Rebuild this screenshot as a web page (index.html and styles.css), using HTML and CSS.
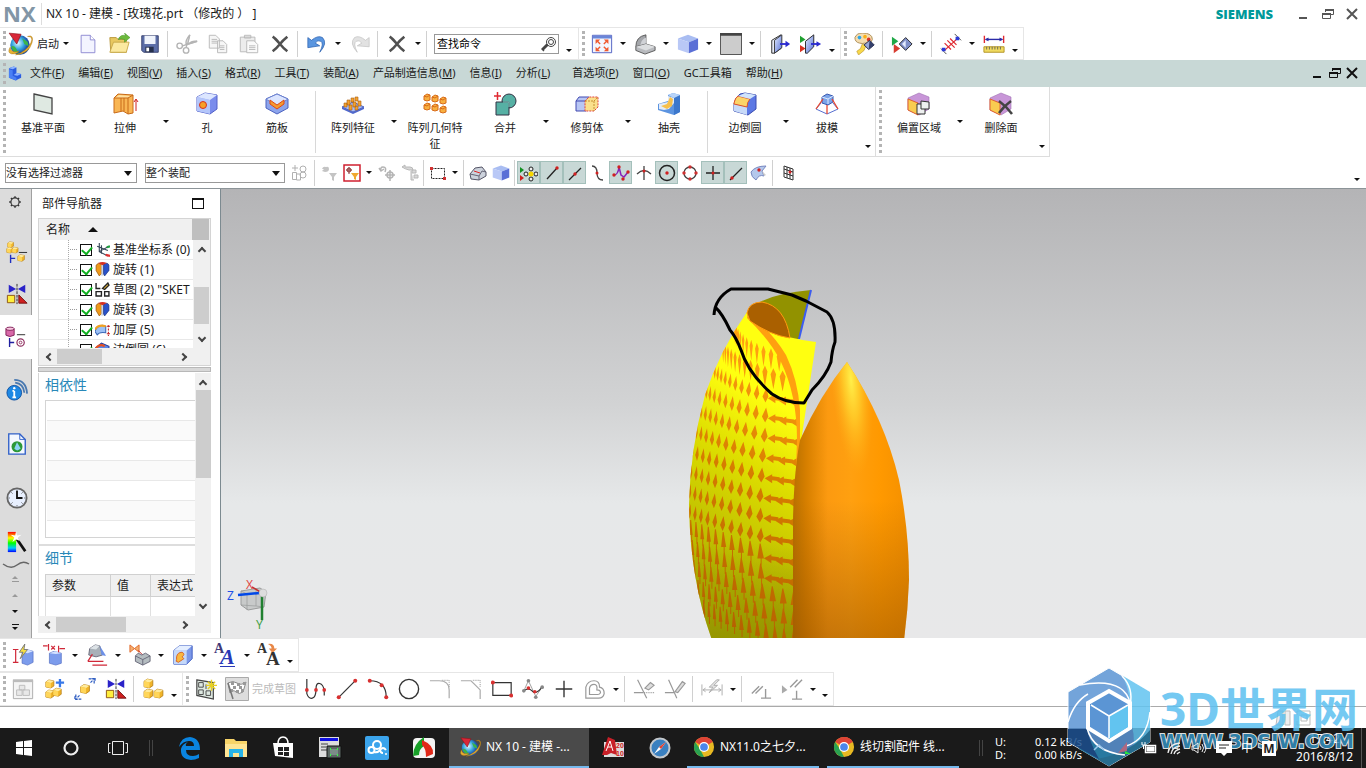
FILE: index.html
```html
<!DOCTYPE html>
<html lang="zh-CN">
<head>
<meta charset="utf-8">
<title>NX 10 - 建模</title>
<link rel="stylesheet" href="styles.css">
</head>
<body>
<svg class="defs" aria-hidden="true">
  <defs>
    <linearGradient id="gBlue" x1="0" y1="0" x2="1" y2="1"><stop offset="0" stop-color="#e6eeff"/><stop offset="1" stop-color="#5570d8"/></linearGradient>
    <linearGradient id="gYel" x1="0" y1="0" x2="1" y2="1"><stop offset="0" stop-color="#ffefae"/><stop offset="1" stop-color="#e39b1c"/></linearGradient>
    <linearGradient id="gGray" x1="0" y1="0" x2="1" y2="1"><stop offset="0" stop-color="#f2f2f2"/><stop offset="1" stop-color="#8c9098"/></linearGradient>
    <radialGradient id="gGlobe" cx=".4" cy=".4"><stop offset="0" stop-color="#e0f8ff"/><stop offset=".6" stop-color="#38a8e0"/><stop offset="1" stop-color="#1c50a8"/></radialGradient>
    <linearGradient id="gRain" x1="0" y1="0" x2="0" y2="1"><stop offset="0" stop-color="#f00"/><stop offset=".3" stop-color="#ff0"/><stop offset=".55" stop-color="#0f0"/><stop offset=".8" stop-color="#0cf"/><stop offset="1" stop-color="#00f"/></linearGradient>
  </defs>
  <symbol id="nx" viewBox="0 0 24 24"><circle cx="12" cy="13" r="9" fill="url(#gGlobe)"/><path d="M4 14q3-1 5 3l2 4q-6-1-7-7zM14 7l5 3 1 4-4-2z" fill="#3bb44a"/><path d="M19 5q6 0 3 6-4 8-14 11 12-1 15-11 2-8-4-6zM3 15q-3 5 1 6 4 1 7-2-5 1-7-1-1-1-1-3z" fill="#e8b030" stroke="#b07a10" stroke-width=".5"/><path d="M2 2l11 1-4 9z" fill="#d82838" stroke="#8c1018" stroke-width=".6"/></symbol>
  <symbol id="cube" viewBox="0 0 24 24"><path d="M1 6l11-4 11 4-10 4z" fill="#a9bdf2"/><path d="M1 6l12 4v12L1 18z" fill="#b9c8f6"/><path d="M23 6l-10 4v12l10-4z" fill="#5a6fd6"/></symbol>
  <symbol id="box" viewBox="0 0 10 10"><path d="M1 3l3-2 5 1v5L6 9 1 8z" fill="#f0b429" stroke="#b07810" stroke-width=".7"/><path d="M1 3l3-2 5 1-3 2z" fill="#ffeb9c"/><path d="M1 3l5 1v5L1 8z" fill="#ffd65a"/></symbol>
  <symbol id="mirror" viewBox="0 0 24 24"><path d="M3 2v9l8-4.500zM21 2v9l-8-4.500z" fill="#2a22c8"/><path d="M12 1v22" stroke="#222" stroke-dasharray="3 1"/><path d="M1.500 13.500h8v8h-8z" fill="#ffee3c" stroke="#8a5010"/><path d="M14 13v9h9z" fill="#d02020" stroke="#701010"/></symbol>
  <symbol id="delx" viewBox="0 0 24 24"><path d="M4 4q3 2 8 8 4 5 8 8M20 4q-5 4-8 8-4 5-8 8" stroke="#505050" stroke-width="2.800" fill="none"/></symbol>
  <symbol id="exit" viewBox="0 0 24 24"><path d="M3 8l10-6v15L6 22H3z" fill="#e8ecf8" stroke="#222"/><path d="M6 8l8-6v14l-8 6z" fill="url(#gBlue)" stroke="#333"/><path d="M12 12h7" stroke="#2a2ad0" stroke-width="2"/><path d="M18 8.500l5 3.500-5 3.500z" fill="#2a2ad0"/></symbol>
  <symbol id="restore" viewBox="0 0 14 14"><path d="M4.500 5V2.500h8v5H10M1.500 6.500h8v5h-8z" fill="none" stroke="currentColor"/><path d="M4 3h9M1 7h9" stroke="currentColor" stroke-width="2"/></symbol>
  <symbol id="close" viewBox="0 0 14 14"><path d="M2 2l10 10M12 2L2 12" stroke="currentColor" stroke-width="2" fill="none"/></symbol>
  <symbol id="min" viewBox="0 0 14 14"><path d="M3 11h8" stroke="currentColor" stroke-width="2"/></symbol>
  <symbol id="rev" viewBox="0 0 14 14"><path d="M1 3q2-3 5-1v9L4 13 1 8z" fill="#f09a18" stroke="#8a4a08" stroke-width=".6"/><path d="M6 2h3v10l-3 1z" fill="#c8d4e8"/><path d="M8 2q4-2 5 1v5l-4 5-1-2z" fill="#2a52c8" stroke="#142a78" stroke-width=".6"/><path d="M3 1q4-2 8 0L7 3z" fill="#d83020"/></symbol>
  <symbol id="chrome" viewBox="0 0 24 24"><circle cx="12" cy="12" r="11" fill="#e8b923"/><path d="M12 12L2.500 6.500A11 11 0 0 1 21.500 6.500z" fill="#de4436"/><path d="M12 1a11 11 0 0 1 9.500 5.500H12z" fill="#de4436"/><path d="M2.500 6.500L8 15l4 8A11 11 0 0 1 2.500 6.500z" fill="#2aa252"/><path d="M8 15l4 2 0-5z" fill="#2aa252"/><circle cx="12" cy="12" r="5.500" fill="#fff"/><circle cx="12" cy="12" r="4.200" fill="#4a86ea"/></symbol>
</svg>

<header class="titlebar">
  <b class="nxlogo">NX</b>
  <span class="title">NX 10 - 建模 - [玫瑰花.prt （修改的 ）&nbsp;]</span>
  <b class="brand">SIEMENS</b>
  <div class="winbtns">
    <button aria-label="最小化"><svg><use href="#min"/></svg></button>
    <button aria-label="还原"><svg><use href="#restore"/></svg></button>
    <button aria-label="关闭"><svg><use href="#close"/></svg></button>
  </div>
</header>

<div class="toolrow toprow">
  <div class="group first">
    <button class="start"><svg class="i24"><use href="#nx"/></svg>启动<i class="tri"></i></button>
    <button class="tb" aria-label="新建"><svg viewBox="0 0 24 24"><path d="M4.500 2.500h10l5 5v14h-15z" fill="#f3f4ff" stroke="#8a86d0"/><path d="M14.500 2.500v5h5" fill="#fff" stroke="#8a86d0"/></svg></button>
    <button class="tb" aria-label="打开"><svg viewBox="0 0 24 24"><path d="M2 5h7l2 2h9v14H3z" fill="#e8c860" stroke="#b8963a"/><path d="M2 21l4-11h17l-3 11z" fill="#fbe9a0" stroke="#c8a84a"/><path d="M11 7q3-6 8-4l-1-3 6 5-6 5V7q-4-1-7 0z" fill="#6cba3c" stroke="#3c8a20" stroke-width=".5"/></svg></button>
    <button class="tb" aria-label="保存"><svg viewBox="0 0 24 24"><path d="M3 3h18v18H5l-2-2z" fill="#5c6ea8" stroke="#34406c"/><path d="M6 3h12v9H6z" fill="#f0f4fc"/><path d="M7 15h9v6H7z" fill="#26304c"/><path d="M8 16h3v4H8z" fill="#fff"/></svg></button>
    <i class="sep"></i>
    <button class="tb" aria-label="剪切"><svg viewBox="0 0 24 24" fill="none" stroke="#b4b4b4" stroke-width="1.500"><path d="M15 2l-4 14M23 9L7 14"/><path d="M15 2q-5 6-4 10l2-1z M23 9q-6-1-9 3z" fill="#e4e4e4"/><circle cx="4" cy="14" r="3"/><circle cx="11" cy="19" r="3"/></svg></button>
    <button class="tb" aria-label="复制"><svg viewBox="0 0 24 24" fill="#f6f6f6" stroke="#b8b8b8"><path d="M2.500 2.500h7l4 4v10h-11zM11.500 8.500h6l4 4v9h-10z"/><path d="M5 7h6M5 9h6M5 11h6M14 14h5M14 16h5M14 18h5"/></svg></button>
    <button class="tb" aria-label="粘贴"><svg viewBox="0 0 24 24" fill="#ececec" stroke="#b8b8b8"><path d="M2.500 4.500h16v16h-16zM7 2.500h7v3H7z"/><path d="M9.500 8.500h8l4 4v9h-12z" fill="#fafafa"/><path d="M12 14h7M12 16h7M12 18h7"/></svg></button>
    <button class="tb" aria-label="删除"><svg><use href="#delx"/></svg></button>
    <i class="sep"></i>
    <button class="tb" aria-label="撤销"><svg viewBox="0 0 24 24"><path d="M2 5l4 3q7-6 12-3 6 6-3 16 5-10 1-12-3-2-6 2l5 3-13 2z" fill="#5a96e0" stroke="#2c62b0" stroke-width=".8"/></svg></button>
    <button class="caret" aria-label="撤销列表"></button>
    <button class="tb" aria-label="重做"><svg viewBox="0 0 24 24"><path d="M22 5l-4 3q-7-6-12-3-6 6 3 16-5-10-1-12 3-2 6 2l-5 3 13 1z" fill="#e2e2e2" stroke="#c2c2c2" stroke-width=".8"/></svg></button>
    <i class="sep"></i>
    <button class="tb" aria-label="清除"><svg><use href="#delx"/></svg></button>
    <button class="caret" aria-label="清除列表"></button>
    <i class="sep"></i>
    <label class="search"><input type="text" value="查找命令" aria-label="查找命令"><svg viewBox="0 0 16 16" fill="none" stroke="#444"><circle cx="10" cy="6" r="4.500"/><circle cx="10" cy="6" r="2.500"/><path d="M7 9l-5 5M6 8l-5 5 2 2" stroke-width="1.500"/></svg></label>
    <button class="caret low" aria-label="工具栏选项"></button>
  </div>
  <div class="group">
    <button class="tb" aria-label="适合窗口"><svg viewBox="0 0 24 24"><path d="M1.500 2.500h21v19h-21z" fill="#f2f6ff" stroke="#4a5cc0"/><path d="M2 3h20v3H2z" fill="#6a86d8"/><path d="M10 12L7 9M14 12l3-3M10 15l-3 3M14 15l3 3" stroke="#f05a30" stroke-width="1.500"/><g fill="#f05a30"><path d="M5 7h5l-5 5zM19 7h-5l5 5zM5 20h5l-5-5zM19 20h-5l5-5z"/></g></svg></button>
    <button class="caret" aria-label="视图列表"></button>
    <button class="tb" aria-label="渲染"><svg viewBox="0 0 24 24"><path d="M2 15Q2 4 13 2v11l-5 5z" fill="#a4a6aa" stroke="#555"/><path d="M7 13q1-6 6-8v8z" fill="#d0d2d6"/><path d="M2 15l11-3 10 3v4l-11 4-10-4z" fill="#b8babe" stroke="#555"/><path d="M2 15l11-3 10 3-10 4z" fill="#dcdee0"/></svg></button>
    <button class="caret" aria-label="渲染列表"></button>
    <button class="tb" aria-label="定向视图"><svg><use href="#cube"/></svg></button>
    <button class="caret" aria-label="方向列表"></button>
    <button class="tb" aria-label="背景"><svg viewBox="0 0 24 24"><path d="M.500 .500h23v23H.500z" fill="#ccc" stroke="#444"/><path d="M0 1.500h24" stroke="#444" stroke-width="3"/></svg></button>
    <button class="caret" aria-label="背景列表"></button>
    <i class="sep"></i>
    <button class="tb" aria-label="剪切截面"><svg><use href="#exit"/></svg></button>
    <button class="tb" aria-label="编辑截面"><svg viewBox="0 0 24 24"><path d="M0 3l6 4-6 4z" fill="#20a030"/><path d="M0 13l6 4-6 4z" fill="#d83020"/><path d="M6 9l9-7v13l-7 7H6z" fill="url(#gBlue)" stroke="#222"/><path d="M12 12h7" stroke="#2a2ad0" stroke-width="2"/><path d="M18 9l5 3-5 3z" fill="#2a2ad0"/></svg></button>
    <button class="caret low" aria-label="工具栏选项"></button>
  </div>
  <div class="group wide">
    <button class="tb" aria-label="对象显示"><svg viewBox="0 0 24 24"><path d="M9 0q11 0 11 7-2 6-8 4-3 1-6 0-5-1-5-6 2-5 8-5z" fill="#f4dcae" stroke="#a88850"/><circle cx="6" cy="5" r="2" fill="#2aa4e8"/><circle cx="12" cy="4" r="2" fill="#f8b018"/><circle cx="16" cy="7" r="2" fill="#e03020"/><path d="M9 12l4 2-2 5-6 5-2-4 4-3z" fill="#f8d848" stroke="#b08a28" stroke-width=".6"/><path d="M11 13l6-5 5 5-6 5z" fill="#98a8d8" stroke="#223"/><path d="M17 8l5 5-6 5z" fill="#34406c"/></svg></button>
    <i class="sep"></i>
    <button class="tb" aria-label="显示和隐藏"><svg viewBox="0 0 24 24"><path d="M1 4l7 5-7 5z" fill="#20a848"/><path d="M3 12l7 5-7 5z" fill="#d83c30"/><path d="M9 12l7-7 7 7-7 7z" fill="#8090c8" stroke="#222"/><path d="M12 12l4-4v8z" fill="#e4ecff"/></svg></button>
    <button class="caret" aria-label="显示列表"></button>
    <i class="sep"></i>
    <button class="tb" aria-label="测量"><svg viewBox="0 0 24 24"><path d="M1 17l6 6M16 1l7 7" stroke="#444"/><path d="M5 19L20 5M5 11l7 7M8 8l8 8M11 6l7 7" stroke="#e02830" stroke-width="1.300"/><path d="M2 16h4v4H2zM17 4h4v4h-4z" fill="#2a3ad8"/></svg></button>
    <button class="caret" aria-label="测量列表"></button>
    <button class="tb" aria-label="测量距离"><svg viewBox="0 0 24 24"><path d="M1.500 3v8M22.500 3v8" stroke="#e02830" stroke-width="1.500"/><path d="M3 7h18" stroke="#2a2aa8" stroke-width="1.500"/><path d="M2 7l4-2v4zM22 7l-4-2v4z" fill="#2a2aa8"/><path d="M1 15h22v6H1z" fill="#f0da60" stroke="#b09020"/><path d="M4 15v3M7 15v3M10 15v3M13 15v3M16 15v3M19 15v3" stroke="#665"/></svg></button>
    <button class="caret low" aria-label="工具栏选项"></button>
  </div>
</div>

<nav class="menubar">
  <svg class="partico" viewBox="0 0 16 16"><path d="M1 3l5-2 3 1v6l5 1v4l-6 3-7-3z" fill="#2a5ce0"/><path d="M1 3l5-2 3 1-4 2z" fill="#8cb4ff"/><path d="M1 4l4 1v6l4 2v3l-8-3z" fill="#4a80f4"/><path d="M6 10l3-2 5 1-4 2z" fill="#8cb4ff"/></svg>
  <button>文件(<u>F</u>)</button><button>编辑(<u>E</u>)</button><button>视图(<u>V</u>)</button><button>插入(<u>S</u>)</button><button>格式(<u>R</u>)</button><button>工具(<u>T</u>)</button><button>装配(<u>A</u>)</button><button>产品制造信息(<u>M</u>)</button><button>信息(<u>I</u>)</button><button class="gapafter">分析(<u>L</u>)</button><button>首选项(<u>P</u>)</button><button>窗口(<u>O</u>)</button><button>GC工具箱</button><button>帮助(<u>H</u>)</button>
  <div class="winbtns docbtns">
    <button aria-label="最小化"><svg><use href="#min"/></svg></button>
    <button aria-label="还原"><svg><use href="#restore"/></svg></button>
    <button aria-label="关闭"><svg><use href="#close"/></svg></button>
  </div>
</nav>

<div class="ribbon">
  <div class="rgroup">
    <button class="rb"><svg viewBox="0 0 24 24"><path d="M3 2l18 4v16L3 18z" fill="#dfe9e2" stroke="#444" stroke-width="1.300"/></svg>基准平面</button>
    <button class="caret" aria-label="更多"></button>
    <button class="rb"><svg viewBox="0 0 24 24"><path d="M1 6l4-4 15 1v18l-5 1-5-3-9 2z" fill="#f9b654" stroke="#c86a18"/><path d="M2 6l4-3 12 1-3 2z" fill="#ffe0a0"/><path d="M1 6h14l5-3M8 6v13M11 6v13M15 6v16" stroke="#c86a18" fill="none"/><path d="M23 19V8M21 10l2-3 2 3" stroke="#d02020" fill="none"/></svg>拉伸</button>
    <button class="caret" aria-label="更多"></button>
    <button class="rb"><svg viewBox="0 0 24 24"><path d="M2 5l8-4 12 2v14l-7 5-13-3z" fill="#7a8cec" stroke="#5260c8"/><path d="M2 5l13 3v14L2 19z" fill="#b4c6fa"/><path d="M2 5l8-4 12 2-7 5z" fill="#dce6ff"/><circle cx="8" cy="13" r="3.500" fill="#f6a028" stroke="#d83020"/></svg>孔</button>
    <button class="rb"><svg viewBox="0 0 24 24"><path d="M1 7l11-5 11 5v9l-11 6-11-6z" fill="#8ca4ec" stroke="#4c62c0"/><path d="M1 7l11-5 11 5-11 7z" fill="#dbe5ff" stroke="#6c82d0"/><path d="M5 8l7 5 7-5v4l-7 5-7-5z" fill="#f59a30" stroke="#e04818"/></svg>筋板</button>
    <i class="rsep"></i>
    <button class="rb"><svg viewBox="0 0 24 24"><path d="M1 15l11-5 11 5-11 5z" fill="#a8bcf4" stroke="#4c62c0"/><path d="M1 15v2l11 5 11-5v-2l-11 5z" fill="#5068cc"/><g fill="#f4a22e" stroke="#a86010" stroke-width=".6"><path d="M6 8h3v5H6zM10 6h3v4h-3zM14 5h3v4h-3zM3 11h3v4H3zM8 13h3v5H8zM12 10h3v5h-3zM17 9h3v5h-3zM14 14h3v4h-3z"/></g></svg>阵列特征</button>
    <button class="caret" aria-label="更多"></button>
    <button class="rb"><svg viewBox="0 0 24 24"><g fill="#f8b040" stroke="#d86a18"><path d="M1 4l3-2 3 1v5l-3 1-3-1zM9 5l3-2 3 1v5l-3 1-3-1zM17 7l3-2 3 1v5l-3 1-3-1zM1 13l3-2 3 1v5l-3 1-3-1zM9 14l3-2 3 1v5l-3 1-3-1zM17 16l3-2 3 1v5l-3 1-3-1z"/><path d="M1 4l3 1 3-2M9 5l3 1 3-2M17 7l3 1 3-2M1 13l3 1 3-2M9 14l3 1 3-2M17 16l3 1 3-2" fill="none"/></g></svg>阵列几何特征</button>
    <button class="rb"><svg viewBox="0 0 24 24"><circle cx="16" cy="9" r="7" fill="#56b0a4" stroke="#334"/><path d="M3 10h13v13H3z" fill="#56b0a4" stroke="#334"/><path d="M10 10h6v5" fill="none" stroke="#80c8be"/><path d="M1 4h7M4.500 0v8" stroke="#e02830" stroke-width="1.500"/></svg>合并</button>
    <button class="caret" aria-label="更多"></button>
    <button class="rb"><svg viewBox="0 0 24 24"><path d="M1 9l3-4h10l-3 4v10H1z" fill="#b8c6f4" stroke="#4048b0"/><path d="M1 9h10" stroke="#4048b0"/><path d="M10 9l4-4h9v10l-4 4h-9z" fill="#fae08c" stroke="#e04040" stroke-dasharray="2 1"/><path d="M10 9h9v10M19 9l4-4" fill="none" stroke="#c89030" stroke-dasharray="2 1"/></svg>修剪体</button>
    <button class="caret" aria-label="更多"></button>
    <button class="rb"><svg viewBox="0 0 24 24"><path d="M11 3l5-2 7 2v17l-6 3-16-5v-6l10-3z" fill="#5c94e0"/><path d="M17 6l6-3v17l-6 3z" fill="#3c78cc"/><path d="M2 12l9-2V4l6 2v5l-5 6-5 1-5-1z" fill="#e4ecf8"/><path d="M4 14l6-2 3-7 3 2-1 7-5 3z" fill="#f6c04c"/><path d="M11 3l5-2 7 2-6 3z" fill="#b8d4f8"/></svg>抽壳</button>
    <i class="rsep"></i>
    <button class="rb"><svg viewBox="0 0 24 24"><path d="M1 12q1-7 6-10l5-1 11 2v14l-8 6-14-4z" fill="#5c78e4" stroke="#3a4cb0"/><path d="M1 12l13 3v8L1 19z" fill="#c8daf8"/><path d="M1 11q1-5 4-7l12 3q-3 3-3 8L1 12z" fill="#fbd468" stroke="#e05028"/><path d="M5 4l7-3 11 2-6 4z" fill="#d0e4fc"/></svg>边倒圆</button>
    <button class="caret" aria-label="更多"></button>
    <button class="rb"><svg viewBox="0 0 24 24"><path d="M6 11l-5 6 11 5 11-5-5-6" fill="#fff" stroke="#5870d0"/><path d="M7 5l5-3 6 2v6l-5 3-6-2z" fill="#7ca4e8" stroke="#3858b0"/><path d="M7 5l6 2 5-3M13 7v5" fill="none" stroke="#dbe8ff"/><path d="M12 13v9M8 7l-7 10M17 7l6 10" stroke="#e84830" stroke-width="1.300"/></svg>拔模</button>
    <button class="caret end" aria-label="选项"></button>
  </div>
  <div class="rgroup">
    <button class="rb"><svg viewBox="0 0 24 24"><path d="M1 6l11-5 10 4v12l-10 6-11-5z" fill="#c896d8" stroke="#a070b4" stroke-width=".6"/><path d="M1 7l10 4v12L1 18z" fill="#f9cc50" stroke="#e06030"/><path d="M10 12h4V9l8 1v7h-4v5h-8z" fill="#eef0f0" stroke="#333"/><path d="M14 12v5h4" fill="none" stroke="#333"/></svg>偏置区域</button>
    <button class="caret" aria-label="更多"></button>
    <button class="rb"><svg viewBox="0 0 24 24"><path d="M1 6l11-5 10 4v12l-10 6-11-5z" fill="#c896d8" stroke="#a070b4" stroke-width=".6"/><path d="M1 7l10 4v12L1 18z" fill="#f9cc50" stroke="#e06030"/><path d="M10 9q7 5 13 13M22 9q-7 5-12 12" stroke="#444" stroke-width="2.500" fill="none"/></svg>删除面</button>
    <button class="caret end" aria-label="选项"></button>
  </div>
</div>

<div class="selbar">
  <span class="combo c1"><select aria-label="选择过滤器"><option>没有选择过滤器</option></select></span>
  <span class="combo c2"><select aria-label="选择范围"><option>整个装配</option></select></span>
  <button class="sb wide" aria-label="仅在工作部件内"><svg viewBox="0 0 18 18" fill="none" stroke="#b0b0b0"><path d="M2.500 8.500h4v7h-4zM6.500 10h4v6h-4zM5 1v6M2 4h6"/><circle cx="13" cy="5" r="3"/><circle cx="13" cy="11" r="3"/></svg></button>
  <i class="sep"></i>
  <button class="sb" aria-label="重置过滤器"><svg viewBox="0 0 18 18"><path d="M2 5q1-3 4-2 3-1 3 2t-4 3L2 7l2-2zM9 9h8l-3 4v4l-2-1v-3z" fill="#c4c4c4"/></svg></button>
  <button class="sb" aria-label="常规选择过滤器"><svg viewBox="0 0 18 18"><path d="M1 1h16v16H1z" fill="#fff" stroke="#d02030" stroke-width="1.500"/><path d="M6 3v7M3 6h6" stroke="#833"/><circle cx="6" cy="6" r="2" fill="none" stroke="#833"/><path d="M8 9h8l-3 4v3l-2-1v-2z" fill="#f0a830"/></svg></button>
  <button class="caret" aria-label="更多"></button>
  <button class="sb" aria-label="选择意图"><svg viewBox="0 0 18 18" fill="none" stroke="#b4b4b4" stroke-width="1.500"><path d="M7 8q2-5-2-5-3 0-2 4M1 4l2 3 3-2M12 6v11M7 11h10"/><circle cx="12" cy="11" r="3"/></svg></button>
  <button class="sb" aria-label="向上一级"><svg viewBox="0 0 18 18" fill="#d8d8d8" stroke="#b8b8b8"><path d="M1 3l3-2v2h5q3 0 3 3H8q-4-1-7-3zM11 6h4v3h-4zM13 11h4v3h-4zM10 7v9h3"/></svg></button>
  <i class="sep"></i>
  <button class="sb" aria-label="矩形选择"><svg viewBox="0 0 18 18"><path d="M2.500 4.500h13v10h-13z" fill="none" stroke="#222" stroke-dasharray="2 1"/><path d="M1 3h3v3H1zM14 13h3v3h-3z" fill="#d03030"/></svg></button>
  <button class="caret" aria-label="更多"></button>
  <i class="sep"></i>
  <button class="sb" aria-label="高亮隐藏边"><svg viewBox="0 0 18 18"><path d="M1 10l5-6 7-1 4 5v4l-7 4-8-1z" fill="#ccd2dc" stroke="#556"/><path d="M1 10l9 2 3-5 4 1M10 12v4" fill="none" stroke="#667"/><path d="M5 7l6 2" stroke="#d22"/></svg></button>
  <button class="sb" aria-label="体显示"><svg><use href="#cube"/></svg></button>
  <i class="sep"></i>
  <button class="sb on" aria-label="捕捉点"><svg viewBox="0 0 18 18"><path d="M0 3l4 3-4 3z" fill="#109020"/><path d="M0 11l4 3-4 3z" fill="#d02020"/><g fill="#eee" stroke="#222"><circle cx="11" cy="5" r="2"/><circle cx="6" cy="10" r="2"/><circle cx="16" cy="10" r="2"/><circle cx="11" cy="15" r="2"/></g><circle cx="11" cy="10" r="2.500" fill="#f8d800"/></svg></button>
  <button class="sb on" aria-label="端点"><svg viewBox="0 0 18 18"><path d="M4 15L14 4" stroke="#222" stroke-width="1.300"/><circle cx="14" cy="4" r="1.700" fill="#d02020"/></svg></button>
  <button class="sb on" aria-label="中点"><svg viewBox="0 0 18 18"><path d="M3 16L15 4" stroke="#222" stroke-width="1.300"/><circle cx="9" cy="10" r="1.700" fill="#d02020"/></svg></button>
  <button class="sb" aria-label="控制点"><svg viewBox="0 0 18 18"><path d="M3 2q5 0 5 7t6 7" fill="none" stroke="#444" stroke-width="1.300"/><circle cx="8" cy="9" r="1.500" fill="#d02020"/></svg></button>
  <button class="sb on" aria-label="极点"><svg viewBox="0 0 18 18"><path d="M2 11q4 0 5-8l2 8 3 2 4-5" fill="none" stroke="#8820b8" stroke-width="1.500"/><g fill="#d02020"><circle cx="2" cy="11" r="1.700"/><circle cx="7" cy="3" r="1.700"/><circle cx="11" cy="15" r="1.700"/><circle cx="16" cy="8" r="1.700"/></g></svg></button>
  <button class="sb" aria-label="交点"><svg viewBox="0 0 18 18"><path d="M2 10q7-7 14 0M9 2v14" fill="none" stroke="#444" stroke-width="1.300"/><circle cx="9" cy="7" r="1.500" fill="#d02020"/></svg></button>
  <button class="sb on" aria-label="圆弧中心"><svg viewBox="0 0 18 18"><circle cx="9" cy="9" r="7.500" fill="none" stroke="#222" stroke-width="1.500"/><circle cx="9" cy="9" r="1.700" fill="#d02020"/></svg></button>
  <button class="sb" aria-label="象限点"><svg viewBox="0 0 18 18"><circle cx="9" cy="9" r="6" fill="none" stroke="#444" stroke-width="1.300"/><g fill="#d03030"><circle cx="9" cy="3" r="1.700"/><circle cx="9" cy="15" r="1.700"/><circle cx="3" cy="9" r="1.700"/><circle cx="15" cy="9" r="1.700"/></g></svg></button>
  <button class="sb on" aria-label="现有点"><svg viewBox="0 0 18 18"><path d="M9 2v14M2 9h14" stroke="#222" stroke-width="1.300"/><circle cx="9" cy="9" r="1.500" fill="#d02020"/></svg></button>
  <button class="sb on" aria-label="曲线上的点"><svg viewBox="0 0 18 18"><path d="M3 16L15 4" stroke="#222" stroke-width="1.300"/><circle cx="5" cy="14" r="1.700" fill="#d02020"/></svg></button>
  <button class="sb" aria-label="面上的点"><svg viewBox="0 0 18 18"><path d="M1 8q4-6 15-6l-4 5 2 5q-5-2-8 4-5-3-5-8z" fill="#b4c8ec" stroke="#7888c0"/><path d="M12 7l2 5 2-1z" fill="#ccc"/><circle cx="9" cy="6" r="1.700" fill="#d02020"/></svg></button>
  <i class="sep"></i>
  <button class="sb wide" aria-label="栅格"><svg viewBox="0 0 18 18"><path d="M4 2l9 3v11l-9-3zM7 3v11M10 4v11M4 5l9 3M4 9l9 3" fill="none" stroke="#333"/><circle cx="10" cy="8" r="1.500" fill="#d02020"/></svg></button>
  <button class="caret low barend" aria-label="选项"></button>
</div>

<main class="work">
  <aside class="rail">
    <button class="gear" aria-label="资源条选项"><svg viewBox="0 0 24 24"><circle cx="12" cy="12" r="7" fill="none" stroke="#333" stroke-width="2"/><path d="M12 2v3M12 19v3M2 12h3M19 12h3M5 5l2 2M17 17l2 2M19 5l-2 2M5 19l2-2" stroke="#333" stroke-width="2.500"/></svg></button>
    <button aria-label="装配导航器"><svg viewBox="0 0 24 24"><use href="#box" x="1" y="0" width="8" height="8"/><use href="#box" x="0" y="6" width="8" height="8"/><use href="#box" x="6" y="6" width="8" height="8"/><path d="M14 12.500h9" stroke="#222"/><path d="M5 15v9M5 19h5" stroke="#2030c0" stroke-width="1.500"/><use href="#box" x="12" y="14" width="9" height="9"/></svg></button>
    <button aria-label="约束导航器"><svg><use href="#mirror"/></svg></button>
    <button class="active" aria-label="部件导航器"><svg viewBox="0 0 24 24"><path d="M1 3v7q4 3 9 0V3z" fill="#d868a8" stroke="#802058"/><ellipse cx="5.500" cy="3" rx="4.500" ry="1.800" fill="#f8c8e0" stroke="#802058"/><path d="M13 9.500h9" stroke="#222"/><path d="M5 13v10M5 18h5" stroke="#2020a0" stroke-width="1.500"/><circle cx="17" cy="18" r="4" fill="none" stroke="#903060" stroke-width="1.300"/><circle cx="17" cy="18" r="1.500" fill="none" stroke="#903060"/></svg></button>
    <button class="lg info" aria-label="HD3D 工具"><svg viewBox="0 0 24 24"><circle cx="9" cy="15" r="8" fill="#1e88e4" stroke="#1050a0"/><path d="M9 13v7M7 13h2M7 20h4" stroke="#fff" stroke-width="2"/><circle cx="9" cy="10" r="1.300" fill="#fff"/><path d="M10 4q9 1 10 11M9 1q13 0 14 15" fill="none" stroke="#4878b0" stroke-width="2"/></svg></button>
    <button class="lg" aria-label="网页浏览器"><svg viewBox="0 0 24 24"><path d="M3 1h12l6 6v16H3z" fill="#f4f8ff" stroke="#3060c8" stroke-width="1.500"/><path d="M15 1v6h6" fill="none" stroke="#3060c8"/><circle cx="12" cy="15" r="6" fill="#2c9838"/><path d="M12 10l4 7q-4 4-7 0z" fill="#8cd4f4"/></svg></button>
    <button class="lg" aria-label="历史记录"><svg viewBox="0 0 24 24"><circle cx="12" cy="12" r="10.500" fill="#e8f0ff" stroke="#666" stroke-width="2"/><path d="M12 4v8h6" fill="none" stroke="#111" stroke-width="2"/><path d="M12 3v1M12 20v1M3 12h1M20 12h1M6 6l1 1M17 17l1 1M18 6l-1 1M6 18l1-1" stroke="#333"/></svg></button>
    <button class="sm" aria-label="角色"><svg viewBox="0 0 24 24"><path d="M2 1h9v22H2z" fill="url(#gRain)"/><path d="M12 9l9 13" stroke="#111" stroke-width="3"/><path d="M11 0l1 5 5-1-4 3 2 4-4-2-4 3 2-5-4-3 5 1z" fill="#fff"/></svg></button>
    <svg class="wave" viewBox="0 0 28 8"><path d="M1 3q8 6 14 1t12-1" fill="none" stroke="#666" stroke-width="1.500"/></svg>
    <button class="nav up bar dim" aria-label="到顶"></button>
    <button class="nav up dim" aria-label="向上"></button>
    <button class="nav" aria-label="向下"></button>
    <button class="nav bar" aria-label="到底"></button>
  </aside>

  <section class="panel">
    <h2>部件导航器<button class="maxi" aria-label="最大化"></button></h2>
    <div class="treebox">
      <div class="treehead"><span>名称</span><i class="uptri"></i><i class="corner"></i></div>
      <div class="treemid">
        <ul class="tree">
          <li><label><input type="checkbox" checked><svg viewBox="0 0 14 14" fill="none"><path d="M4 1v8l8 4M4 9l9-5M2 4l10 4M6 3v8" stroke="#345"/><path d="M10 12l4 1" stroke="#e03030" stroke-width="2"/><path d="M11 5l3-1" stroke="#20a040" stroke-width="2"/></svg>基准坐标系 (0)</label></li>
          <li><label><input type="checkbox" checked><svg><use href="#rev"/></svg>旋转 (1)</label></li>
          <li><label><input type="checkbox" checked><svg viewBox="0 0 14 14" fill="none" stroke="#222" stroke-width="1.300"><path d="M1 1v5h4M1 9h5v4H1zM9 9h4v4H9z"/><path d="M7 6l5-5 1 2-4 4z" fill="#f4c040"/></svg>草图 (2) "SKET</label></li>
          <li><label><input type="checkbox" checked><svg><use href="#rev"/></svg>旋转 (3)</label></li>
          <li><label><input type="checkbox" checked><svg viewBox="0 0 14 14"><path d="M0 9q1-5 7-6l3 1v6q-6-1-8 2z" fill="#9cc0f4" stroke="#3a68b8"/><path d="M0 7q3-5 10-3" fill="none" stroke="#f0a020" stroke-width="2"/><path d="M12.500 3v10" stroke="#c02020" stroke-dasharray="2 1"/><path d="M11 4h3M11 11h3" stroke="#c02020"/></svg>加厚 (5)</label></li>
          <li><label><input type="checkbox" checked><svg viewBox="0 0 14 14"><path d="M0 6l6-5 7 3v6l-7 4-6-3z" fill="#5a86e8" stroke="#283c98"/><path d="M0 7q4-6 9-3" fill="none" stroke="#e85020" stroke-width="2"/></svg>边倒圆 (6)</label></li>
        </ul>
        <div class="vscroll"><i class="chev u"></i><i class="thumb"></i><i class="chev d"></i></div>
      </div>
      <div class="hscroll"><i class="chev l"></i><i class="thumb t45"></i><i class="chev r"></i></div>
    </div>
    <div class="splitter"></div>
    <div class="lower">
      <div class="lowmid">
        <div class="lowbody">
          <h3>相依性</h3>
          <div class="deps"><i></i><i></i><i></i><i></i><i></i><i></i><i></i></div>
          <h3 class="details">细节</h3>
          <table class="params"><thead><tr><th>参数</th><th>值</th><th>表达式</th></tr></thead><tbody><tr><td></td><td></td><td></td></tr></tbody></table>
        </div>
        <div class="vscroll big"><i class="chev u"></i><i class="thumb"></i><i class="chev d"></i></div>
      </div>
      <div class="hscroll"><i class="chev l"></i><i class="thumb t70"></i><i class="chev r"></i></div>
    </div>
  </section>

  <section class="canvas">
    <svg viewBox="221 189 1145 449" preserveAspectRatio="xMidYMax slice">
      <defs>
        <linearGradient id="petalR" x1="0" x2="1" y1="0" y2="0"><stop offset="0" stop-color="#b87000"/><stop offset=".12" stop-color="#d88000"/><stop offset=".3" stop-color="#fc9a10"/><stop offset=".5" stop-color="#ffa010"/><stop offset=".75" stop-color="#ff9900"/><stop offset="1" stop-color="#f49000"/></linearGradient>
        <linearGradient id="shadeV" x1="0" x2="0" y1="0" y2="1"><stop offset=".5" stop-color="#904e00" stop-opacity="0"/><stop offset="1" stop-color="#904e00" stop-opacity=".5"/></linearGradient>
        <radialGradient id="glow" cx="0" cy="0" r="1" gradientUnits="userSpaceOnUse" gradientTransform="translate(851 380) rotate(-5) scale(20 95)"><stop offset="0" stop-color="#fff04a"/><stop offset=".4" stop-color="#ffd830" stop-opacity=".7"/><stop offset="1" stop-color="#ffb018" stop-opacity="0"/></radialGradient>
        <linearGradient id="petalL" gradientUnits="userSpaceOnUse" x1="690" y1="560" x2="810" y2="370"><stop offset="0" stop-color="#b4b400"/><stop offset=".5" stop-color="#dede00"/><stop offset=".8" stop-color="#ffff10"/></linearGradient>
        <linearGradient id="shadeL" x1="0" x2="0" y1="0" y2="1"><stop offset=".6" stop-color="#707000" stop-opacity="0"/><stop offset="1" stop-color="#707000" stop-opacity=".45"/></linearGradient>
        <linearGradient id="markG" gradientUnits="userSpaceOnUse" x1="690" y1="640" x2="800" y2="370"><stop offset="0" stop-color="#b05c00"/><stop offset=".6" stop-color="#d67c00"/><stop offset="1" stop-color="#ffa010"/></linearGradient>
        <clipPath id="clipL"><path d="M747 312Q720 350 705 395Q690 450 689 505Q690 580 712 640H794V500L799 445Q799 385 780 350Q770 335 748 318z"/></clipPath>
      </defs>
      <path d="M756 304Q775 293 811 290L799 339H775z" fill="#929200"/>
      <path d="M811 290l-12 49" stroke="#3c5cf0" stroke-width="2"/>
      <path d="M747 312Q720 350 705 395Q690 450 689 505Q690 580 712 640H794V500L801 442L816 342Q780 338 755 324z" fill="url(#petalL)"/>
      <path d="M705 395Q690 450 689 505Q690 580 712 640H794V395z" fill="url(#shadeL)"/>
      <g id="marks" clip-path="url(#clipL)" fill="url(#markG)"></g>
      <path d="M748 313Q773 333 786 355Q798 380 800 410V455L795 500L797 440Q797 395 781 362Q770 340 747 318z" fill="#ffa010"/>
      <path d="M747 313Q749 302 762 302Q785 306 790 338Q770 335 750 321z" fill="#aa6000" stroke="#ff9a10"/>
      <path d="M847 362Q885 420 899 480Q909 530 909 580Q908 610 904 640H793V520Q794 470 800 440Q820 395 847 362z" fill="url(#petalR)"/>
      <path d="M847 362Q885 420 899 480Q909 530 909 580Q908 610 904 640H793V520Q794 470 800 440Q820 395 847 362z" fill="url(#shadeV)"/>
      <path d="M847 362Q885 420 899 480H798Q798 450 800 440Q820 395 847 362z" fill="url(#glow)"/>
      <path d="M714 315Q715 298 731 289H768L792 295L806 301L827 312Q836 320 835 342Q832 350 831 362Q826 376 812 390L804 403Q785 403 772 394Q748 373 741 350Q736 337 730 330Q722 313 715 307" fill="none" stroke="#000" stroke-width="3" stroke-linejoin="round"/>
      <g class="triad">
        <path d="M241 591l19-3 6 4-2 15-16 3-7-5z" fill="#c8caca" stroke="#9a9c9c"/><path d="M241 591l6 3v16M247 594l17-2M256 589v17l8 1M241 605l15 1" fill="none" stroke="#9a9c9c" stroke-width=".7"/>
        <path d="M262 593l-10-6" stroke="#c03030" stroke-width="1.500"/><path d="M238 595l22-2" stroke="#0048e8" stroke-width="2.500"/><path d="M262 596v24" stroke="#208030" stroke-width="2.500"/><circle cx="263" cy="593" r="4" fill="#ddd" stroke="#aaa" stroke-width=".5"/>
        <text x="246" y="589" fill="#e04848">X</text><text x="227" y="600" fill="#2050e8">Z</text><text x="256" y="629" fill="#40a048">Y</text>
      </g>
    </svg>
  </section>
</main>

<div class="toolrow">
  <div class="group">
    <button class="tb" aria-label="线性尺寸"><svg viewBox="0 0 24 24"><path d="M11 9l5-3 7 2v12l-6 3-6-2z" fill="#7c9cec" stroke="#4c68c0" stroke-width=".7"/><path d="M11 9l6 1 6-2-6-2z" fill="#d4e2ff"/><path d="M1 6h6M1 20h6M4 6v14" stroke="#d02838" stroke-width="1.300"/><path d="M14 0l-6 9h4l-3 7 8-10h-4z" fill="#f8e040" stroke="#777"/></svg></button>
    <button class="tb" aria-label="移动面"><svg viewBox="0 0 24 24"><path d="M7 10l5-2 8 2v11l-6 2-7-2z" fill="#7c9cec" stroke="#4c68c0" stroke-width=".7"/><path d="M7 10l7 1 6-1-7-2z" fill="#d4e2ff"/><path d="M0 2h5M18 5h6M6 0v7M17 2v7M9 2l4 4M13 2l-4 4" stroke="#d02838" stroke-width="1.300"/></svg></button>
    <button class="caret" aria-label="更多"></button>
    <button class="tb" aria-label="拉出面"><svg viewBox="0 0 24 24"><path d="M4 5l6-4 5 1 3 10-7 2-8-2z" fill="#a8b0b8" stroke="#667"/><path d="M4 5l6-4 5 1-4 4z" fill="#dce2e6"/><path d="M15 2l7 11-5-1z" fill="#6c90e8"/><path d="M2 19l5-8M2 19h17M7 23h16" stroke="#d02838" stroke-width="1.300"/></svg></button>
    <button class="caret" aria-label="更多"></button>
    <button class="tb" aria-label="替换面"><svg viewBox="0 0 24 24"><path d="M1 1l5 4 5-4v8L6 5 1 9z" fill="#f4b070" stroke="#e06828"/><path d="M10 7l6 6" stroke="#c02020"/><path d="M7 13l3-3 4 2 4-2 5 3v6l-8 4-8-4z" fill="#b4bcc0" stroke="#667"/><path d="M7 13l8 4 8-4M15 17v6" fill="none" stroke="#667"/></svg></button>
    <button class="caret" aria-label="更多"></button>
    <button class="tb" aria-label="缩放"><svg viewBox="0 0 24 24"><path d="M2 7l6-5h14v14l-6 6H2z" fill="#7c98e8" stroke="#3858c0"/><path d="M2 7h14v15H2z" fill="#c4d8fa"/><path d="M2 7l6-5h14l-6 5z" fill="#e4eeff"/><path d="M5 14q1-5 6-5 4 2 0 5l2 2-6 4q-4-1-2-3z" fill="#f8b840" stroke="#d86020"/></svg></button>
    <button class="caret" aria-label="更多"></button>
    <button class="tb glyph" aria-label="文本"><span class="ga">A</span><span class="gb">A</span></button>
    <button class="caret" aria-label="更多"></button>
    <button class="tb glyph dark" aria-label="文本替换"><span class="ga">A</span><svg class="gc" viewBox="0 0 12 12"><path d="M1 1q7-1 7 5h3l-5 5-4-5h3q0-3-4-5z" fill="#e88848"/></svg><span class="gb">A</span></button>
    <button class="caret low" aria-label="更多"></button>
  </div>
</div>

<div class="toolrow lastrow">
  <div class="group">
    <button class="tb" aria-label="查找组件"><svg viewBox="0 0 24 24"><path d="M1.500 2.500h21v20h-21z" fill="#f4f4f4" stroke="#aaa"/><path d="M1 3h22" stroke="#bbb" stroke-width="3"/><path d="M8 8h6v5H8zM5 13h6v6H5zM12 13h7v6h-7z" fill="#e8e8e8" stroke="#bbb"/></svg></button>
    <button class="tb" aria-label="添加组件"><svg viewBox="0 0 24 24"><use href="#box" x="2" y="1" width="11" height="11"/><use href="#box" x="2" y="12" width="11" height="11"/><use href="#box" x="10" y="10" width="11" height="11"/><path d="M14 5h9M18.500 1v9" stroke="#3878e8" stroke-width="2.500"/></svg></button>
    <button class="tb" aria-label="移动组件"><svg viewBox="0 0 24 24"><use href="#box" x="6" y="6" width="12" height="12"/><path d="M16 1h6v6M19 0h4v4M18 5l3-3M8 23H2v-6M1 20v4h4M6 19l-3 3" stroke="#2858c0" stroke-width="1.300" fill="none" stroke-dasharray="3 1"/></svg></button>
    <button class="tb" aria-label="装配约束"><svg><use href="#mirror"/></svg></button>
    <i class="sep"></i>
    <button class="tb" aria-label="爆炸图"><svg viewBox="0 0 24 24"><use href="#box" x="1" y="0" width="12" height="12"/><use href="#box" x="1" y="11" width="12" height="12"/><use href="#box" x="12" y="11" width="12" height="12"/></svg></button>
    <button class="caret low" aria-label="更多"></button>
  </div>
  <div class="group wide2">
    <button class="tb" aria-label="草图"><svg viewBox="0 0 24 24"><path d="M2 2l18 3v18L2 19z" fill="#dfe9e2" stroke="#444" stroke-width="1.300"/><path d="M4 5h5v5H4zM12 7v5M4 13h5v5H4zM12 14h5v5h-5z" fill="none" stroke="#444"/><path d="M18 2v12M12 8h12M14 4l8 8M22 4l-8 8" stroke="#e8d020" stroke-width="1.500"/></svg></button>
    <button class="finish" disabled><svg viewBox="0 0 24 24"><path d="M.500 .500h23v23H.500z" fill="#ddd" stroke="#aaa"/><path d="M3 6q5-3 9 0t9-1l-3 10q-4 3-7 0t-6 1z" fill="#fff" stroke="#888"/><path d="M6 5h3v3H6zM12 6h3v3h-3zM18 5h3v3h-3zM8 9h3v3H8zM14 9h3v3h-3zM5 12h3v3H5zM11 13h3v3h-3zM16 12h3v3h-3z" fill="#999"/><path d="M3 6l5 16" stroke="#777" stroke-width="1.500"/></svg>完成草图</button>
    <button class="tb" aria-label="轮廓"><svg viewBox="0 0 24 24"><path d="M2 1v16q2 6 6 5 4-1 4-10 0-7 4-6t5 8v5" fill="none" stroke="#333" stroke-width="1.300"/><g fill="#d83030"><circle cx="2" cy="13" r="2"/><circle cx="12" cy="13" r="2"/><circle cx="21" cy="13" r="2"/></g></svg></button>
    <button class="tb" aria-label="直线"><svg viewBox="0 0 24 24"><path d="M4 20L20 4" stroke="#333" stroke-width="1.300"/><circle cx="3" cy="21" r="2.200" fill="#d83030"/><circle cx="21" cy="3" r="2.200" fill="#d83030"/></svg></button>
    <button class="tb" aria-label="圆弧"><svg viewBox="0 0 24 24"><path d="M3 3q18 0 18 18" fill="none" stroke="#333" stroke-width="1.300"/><g fill="#d83030"><circle cx="3" cy="3" r="2.200"/><circle cx="16" cy="8" r="2.200"/><circle cx="21" cy="21" r="2.200"/></g></svg></button>
    <button class="tb" aria-label="圆"><svg viewBox="0 0 24 24"><circle cx="12" cy="12" r="10.500" fill="none" stroke="#333" stroke-width="1.500"/></svg></button>
    <button class="tb" aria-label="圆角"><svg viewBox="0 0 24 24" fill="none" stroke="#aaa" stroke-width="1.300"><path d="M1 3h10q11 0 11 10v9"/><path d="M14 2.500h8v8" stroke-dasharray="1 1"/></svg></button>
    <button class="tb" aria-label="倒斜角"><svg viewBox="0 0 24 24" fill="none" stroke="#aaa" stroke-width="1.300"><path d="M1 3h11l10 10v10"/><path d="M14 2.500h8v8" stroke-dasharray="1 1"/></svg></button>
    <button class="tb" aria-label="矩形"><svg viewBox="0 0 24 24"><path d="M2 5h20v14H2z" fill="none" stroke="#333" stroke-width="1.300"/><circle cx="2" cy="5" r="2.200" fill="#d83030"/><circle cx="22" cy="19" r="2.200" fill="#d83030"/></svg></button>
    <button class="tb" aria-label="艺术样条"><svg viewBox="0 0 24 24"><path d="M2 14l5-11 8 17 7-10" fill="none" stroke="#999"/><path d="M2 14q5-4 9 0 4 5 11-4" fill="none" stroke="#333" stroke-width="1.300"/><g fill="#888"><circle cx="2" cy="14" r="2"/><circle cx="7" cy="3" r="2"/><circle cx="15" cy="21" r="2"/><circle cx="22" cy="10" r="2"/></g><circle cx="7" cy="11" r="2" fill="#d83030"/><circle cx="14" cy="15" r="2" fill="#d83030"/></svg></button>
    <button class="tb" aria-label="点"><svg viewBox="0 0 24 24"><path d="M12 3v18M3 12h18" stroke="#333" stroke-width="1.500"/></svg></button>
    <button class="tb" aria-label="偏置曲线"><svg viewBox="0 0 24 24" fill="none" stroke="#999" stroke-width="1.300"><path d="M2 22V10q2-7 9-7 6 0 6 7 5 1 5 7-1 5-6 5z"/><path d="M6 18v-7q1-4 5-4t3 6q4 0 4 3-1 2-3 2z"/></svg></button>
    <button class="caret" aria-label="更多"></button>
    <i class="sep"></i>
    <button class="tb" aria-label="快速修剪"><svg viewBox="0 0 24 24" fill="none" stroke="#999" stroke-width="1.300"><path d="M5 2l10 20M1 16h10"/><path d="M12 16h11" stroke-dasharray="1 1"/><path d="M13 11l6-6 4 3-6 5z" fill="#ddd"/></svg></button>
    <button class="tb" aria-label="快速延伸"><svg viewBox="0 0 24 24" fill="none" stroke="#999" stroke-width="1.300"><path d="M5 2l9 20M1 16h10"/><path d="M12 15l8-11 3 2-8 10z" fill="#ddd"/></svg></button>
    <i class="sep"></i>
    <button class="tb" aria-label="快速尺寸"><svg viewBox="0 0 24 24" fill="none" stroke="#aaa"><path d="M1 7v12M23 7v12M3 13h18M5 11l-3 2 3 2M19 11l3 2-3 2"/><path d="M17 2l-8 8h4l-4 6 9-8h-4l6-6z" fill="#e4e4e4"/></svg></button>
    <button class="caret" aria-label="更多"></button>
    <i class="sep"></i>
    <button class="tb" aria-label="几何约束"><svg viewBox="0 0 24 24" stroke="#999" stroke-width="1.500"><path d="M2 17l8-8M6 17l8-8M17 12v10M12 22h11"/></svg></button>
    <button class="tb" aria-label="自动约束"><svg viewBox="0 0 24 24" stroke="#999" stroke-width="1.500"><path d="M1 8l6 5-6 4z" fill="#aaa" stroke="none"/><path d="M10 10l8-8M15 10l8-8M17 14v9M12 23h11"/></svg></button>
    <button class="caret" aria-label="更多"></button>
    <button class="caret low" aria-label="更多"></button>
  </div>
</div>

<div class="status"><svg viewBox="0 0 36 16" fill="#eee" stroke="#bbb"><path d="M3 1h5v14H1zM10 1h5v14h-5z"/><path d="M22 5V1h13v14H22v-4M26 5h6v6h-6z" fill="none"/></svg></div>

<footer class="taskbar">
  <button class="tk" aria-label="开始"><svg viewBox="0 0 24 24" fill="#fff"><path d="M4 6l7-1v6H4zM12 5l8-1v7h-8zM4 12h7v7l-7-1zM12 12h8v8l-8-1z"/></svg></button>
  <button class="tk" aria-label="Cortana"><svg viewBox="0 0 24 24"><circle cx="12" cy="12" r="6.500" fill="none" stroke="#eee" stroke-width="2.200"/></svg></button>
  <button class="tk" aria-label="任务视图"><svg viewBox="0 0 24 24" fill="none" stroke="#eee"><path d="M6.500 5.500h11v13h-11zM4.500 7.500h-2v9h2M19.500 7.500h2v9h-2"/></svg></button>
  <i class="bars"></i>
  <button class="tk" aria-label="Edge"><svg viewBox="0 0 24 24"><path d="M2 11Q4 1 13 1q10 1 10 13H9q0 6 7 6 3 0 6-2v4q-4 2-8 2-11-1-10-11 1-5 7-7-3 2-2 4h8q0-5-5-5-6 0-10 6z" fill="#0a84e0"/></svg></button>
  <button class="tk" aria-label="文件资源管理器"><svg viewBox="0 0 24 24"><path d="M1 3h9l2 2h11v16H1z" fill="#f8d468"/><path d="M1 8h22v13H1z" fill="#ffe594"/><path d="M5 21v-8h14v8h-4v-4H9v4z" fill="#28b4e8"/></svg></button>
  <button class="tk" aria-label="应用商店"><svg viewBox="0 0 24 24"><path d="M2 7h20v15L4 20z" fill="#fff"/><path d="M7 8q0-7 5-7t5 7" fill="none" stroke="#fff" stroke-width="1.500"/><path d="M7 11h5v4H7zM13 11h5v4h-5zM7 16h5v3H7zM13 16h5v4h-5z" fill="#222"/></svg></button>
  <button class="tk" aria-label="工具"><svg viewBox="0 0 24 24"><path d="M1 1h20v20H1z" fill="#ddd"/><path d="M2 2h18v3H2z" fill="#1010e0"/><path d="M3 8h7M3 11h5M3 14h6" stroke="#444"/><path d="M9 10h14v12H9z" fill="#5c6864" stroke="#111"/><path d="M12 13h8v6h-8z" fill="#7c8c88"/><path d="M12 13h1M19 13h1M12 19h1M19 19h1" stroke="#3f4" stroke-width="2"/></svg></button>
  <button class="tk" aria-label="百度云"><svg viewBox="0 0 24 24"><rect width="24" height="24" rx="2" fill="#3ba4ec"/><g fill="none" stroke="#fff" stroke-width="2"><circle cx="12" cy="9" r="4"/><circle cx="6.500" cy="14" r="3"/><path d="M9 16q4 1 6-2 3-4 6 0M15 13q0 4 3 4"/></g><circle cx="21" cy="18" r="1" fill="#fff"/></svg></button>
  <button class="tk" aria-label="应用"><svg viewBox="0 0 24 24"><rect x="1" y="2" width="22" height="20" rx="4" fill="#f4f4f4"/><path d="M12 1v9q-5 3-5 9l-6 1Q1 8 12 1z" fill="#18a028"/><path d="M10 4q12 5 11 14l-7 3q0-9-4-12z" fill="#e02818"/></svg></button>
  <button class="task current"><svg><use href="#nx"/></svg>NX 10 - 建模 -...</button>
  <button class="tk" aria-label="AutoCAD"><svg viewBox="0 0 24 24"><path d="M3 6h20v15H3z" fill="#ddd"/><path d="M1 19L7 1l7 3 2 15-6-2-4 2z" fill="#c82028"/><path d="M5 15l4-10 3 10M7 11h4" stroke="#fff" fill="none"/><text x="15" y="12" class="tiny">20</text><text x="15" y="20" class="tiny">10</text></svg></button>
  <button class="tk" aria-label="Safari"><svg viewBox="0 0 24 24"><circle cx="12" cy="12" r="9.500" fill="#3a80c0" stroke="#c4c8cc" stroke-width="2"/><path d="M18 6l-5 7-7 5 5-7z" fill="#fff"/><path d="M18 6l-7 5 2 2z" fill="#e04030"/></svg></button>
  <button class="task t1"><svg><use href="#chrome"/></svg>NX11.0之七夕...</button>
  <button class="task t1"><svg><use href="#chrome"/></svg>线切割配件 线...</button>
  <i class="bars"></i>
  <dl class="net"><dt>U:</dt><dd>0.12 kB/s</dd><dt>D:</dt><dd>0.00 kB/s</dd></dl>
  <div class="tray">
    <svg viewBox="0 0 16 16"><path d="M3 10l5-5 5 5" fill="none" stroke="#9cc8ec" stroke-width="1.500"/></svg>
    <svg viewBox="0 0 16 16"><path d="M2 13L11 2v9z" fill="#b06880"/><path d="M9 11l6 3H9z" fill="#28e838"/></svg>
    <svg viewBox="0 0 16 16" fill="none" stroke="#fff"><path d="M4.500 5.500h10v7h-10z" stroke-width="1.500"/><path d="M6 7h7v4H6z" fill="#fff"/><path d="M1 2v3h3V2M2.500 5v4"/></svg>
    <svg viewBox="0 0 16 16" fill="none" stroke="#eee" stroke-width="1.300"><path d="M2 13Q3 4 14 3M5 14q1-7 9-8M8 14q1-4 6-5M11 14q1-1 3-2"/></svg>
    <svg viewBox="0 0 16 16" fill="none" stroke="#eee"><path d="M1 6h2l4-3v10l-4-3H1zM9 6q2 2 0 4M11 4q3 4 0 8M13 3q4 5 0 10"/></svg>
    <svg viewBox="0 0 16 16"><path d="M0 1h16v12h-5l-3 3-3-3H0z" fill="#fff"/><path d="M3 5h10M3 8h7" stroke="#222"/></svg>
    <span>中</span>
    <b>M</b>
  </div>
  <div class="clock"><span>17:42</span><span>2016/8/12</span></div>
</footer>

<div class="watermark">
  <svg viewBox="0 0 84 100">
    <g opacity=".85"><path d="M42 1l41 24v50L42 99 1 75V25z" fill="#5b95d4" stroke="#fff"/><path d="M56 9l27 16v50L66 85q3-20-4-33 4-20-6-43z" fill="#62c4f0"/><path d="M19 66q10 20 39 23L42 99 12 82 19 66z" fill="#2a8ab8"/><path d="M83 63v12L42 99 30 92q34-6 53-29z" fill="#2a7ca4"/><path d="M1 62h19q3 14 12 30L1 75z" fill="#1c5090"/></g>
    <path d="M13 18q44-8 50 18M55 9q12 12 8 30M1 55q6-20 20-28M20 61q6 24 38 27M83 45q-3 28-24 34" fill="none" stroke="#fff" stroke-width="1.500"/>
    <path d="M42 24l21 12v25L42 74 21 61V36z" fill="#5b95d4" stroke="#fff" stroke-width="4"/>
    <path d="M42 49l19-11v22L42 72z" fill="#62c4f0"/><path d="M24 38l18 11v22M42 49l19-11" fill="none" stroke="#fff" stroke-width="1.500"/>
  </svg>
  <div><strong>3D世界网</strong><span>WWW.3DSJW.COM</span></div>
</div>
<script src="model.js"></script>
</body>
</html>
```
FILE: styles.css
```css
* { box-sizing: border-box; }
html, body { height: 100%; }
body { margin: 0; display: flex; flex-direction: column; overflow: hidden; background: #fff; color: #1a1a1a; font: 12px/16px "Noto Sans", "Noto Sans CJK SC", sans-serif; }
button { border: 0; padding: 0; margin: 0; background: none; font: inherit; color: inherit; flex: none; }
svg { display: block; flex: none; }
i { font-style: normal; }
.defs { position: absolute; width: 0; height: 0; }

.titlebar { height: 27px; flex: none; display: flex; align-items: center; }
.nxlogo { width: 42px; height: 22px; padding-left: 3px; font: bold 22px/20px "Open Sans", sans-serif; color: #8296a6; border-right: 1px solid #ddd; }
.title { padding-left: 4px; white-space: nowrap; }
.brand { margin-left: auto; margin-right: 23px; color: #009999; font: 800 13px/16px "Open Sans", sans-serif; }
.winbtns { display: flex; width: 70px; justify-content: space-between; padding-right: 7px; color: #555; }
.winbtns svg { width: 14px; height: 14px; }
.docbtns { margin-left: auto; width: 56px; color: #111; }

.toolrow { height: 34px; flex: none; display: flex; }
.toprow { height: 33px; }
.group { display: flex; align-items: center; padding-left: 7px; padding-right: 2px; border: 1px solid #e6e6e6; border-left: 0; position: relative; }
.group::before, .rgroup::before, .menubar::before { content: ""; position: absolute; left: 3px; top: 3px; bottom: 3px; border-left: 3px dotted #b4b4b4; }
.first { padding-right: 3px; }
.wide { padding-left: 8px; }
.start { display: flex; align-items: center; gap: 4px; padding-right: 3px; font-size: 11px; }
.i24 { width: 26px; height: 26px; }
.tb { width: 31px; height: 30px; display: flex; align-items: center; justify-content: center; }
.tb svg { width: 22px; height: 22px; }
.tri, .caret::after { content: ""; display: block; border: 3px solid transparent; border-top-color: #111; border-bottom: 0; }
.caret { width: 12px; height: 30px; display: flex; align-items: center; justify-content: center; }
.low { padding-top: 13px; }
.sep { width: 6px; height: 26px; flex: none; background: linear-gradient(#d0d0d0, #d0d0d0) 2px 0 / 1px 100% no-repeat; }
.search { display: flex; align-items: center; width: 125px; height: 20px; margin: 0 4px; border: 1px solid #999; }
.search input { flex: 1; min-width: 0; border: 0; padding: 0 2px; outline: 0; font: 11px/16px "Noto Sans", "Noto Sans CJK SC", sans-serif; }
.search svg { width: 16px; height: 16px; margin-right: 1px; }

.menubar { height: 27px; flex: none; display: flex; align-items: center; gap: 14px; padding: 0 0 2px 8px; background: #c8d8d6; font-size: 11px; position: relative; }
.partico { width: 15px; height: 16px; margin-right: -7px; }
.gapafter { margin-right: 8px; }

.ribbon { height: 70px; flex: none; display: flex; align-items: stretch; }
.rgroup { display: flex; padding-left: 8px; position: relative; border-right: 1px solid #ddd; border-bottom: 1px solid #ddd; padding-right: 1px; }
.rb { width: 70px; height: 66px; padding: 5px 6px 0; display: flex; flex-direction: column; align-items: center; gap: 4px; font-size: 11px; }
.rb svg { width: 24px; height: 24px; overflow: visible; }
.rgroup .caret { height: 68px; }
.rgroup .end { padding-top: 50px; }
.rsep { width: 6px; height: 62px; margin-top: 4px; background: linear-gradient(#d8d8d8, #d8d8d8) 3px 0 / 1px 100% no-repeat; }

.selbar { height: 32px; flex: none; display: flex; align-items: center; padding-left: 5px; border-bottom: 1px solid #8c9498; }
.selbar .sep { width: 5px; }
.combo { position: relative; height: 20px; margin-right: 8px; }
.combo select { appearance: none; width: 100%; height: 100%; border: 1px solid #999; border-radius: 0; background: #fff; padding: 0; color: #1a1a1a; font: 11px/16px "Noto Sans", "Noto Sans CJK SC", sans-serif; }
.combo::after { content: ""; position: absolute; right: 5px; top: 8px; border: 4px solid transparent; border-top: 5px solid #111; border-bottom: 0; pointer-events: none; }
.c1 { width: 132px; }
.c2 { width: 140px; margin-right: 0; }
.sb { width: 23px; height: 23px; display: flex; align-items: center; justify-content: center; }
.sb svg { width: 18px; height: 18px; }
.sb.wide { width: 27px; padding: 0; }
.sb.on { background: #c8d8d6; border: 1px solid #a4c0bb; }
.barend { margin-left: auto; margin-right: 3px; }

.work { flex: 1; min-height: 0; display: flex; }
.rail { width: 32px; flex: none; background: #dcdcdc; border-right: 1px solid #a0a0a0; display: flex; flex-direction: column; padding-left: 2px; }
.rail button { height: 42px; width: 30px; display: flex; align-items: center; justify-content: center; }
.rail button svg { width: 22px; height: 24px; }
.rail .gear { height: 42px; align-items: flex-start; padding: 6px 4px 0 0; }
.rail .gear svg { width: 14px; height: 14px; }
.rail .active { background: #fff; width: 32px; margin-left: -2px; height: 44px; }
.rail .lg { height: 54px; }
.rail .info { margin-top: 4px; }
.rail .sm { height: 34px; }
.wave { width: 28px; height: 12px; }
.rail .nav { height: 16px; width: 26px; flex-direction: column; gap: 2px; }
.nav::after { content: ""; border: 3px solid transparent; border-top-color: #111; border-bottom: 0; }
.nav.bar::before { content: ""; width: 7px; height: 1px; background: #111; }
.nav.up::after { border: 3px solid transparent; border-bottom-color: #999; border-top: 0; }
.nav.dim.bar { flex-direction: column-reverse; }
.nav.dim.bar::before { background: #999; }

.panel { width: 189px; flex: none; padding: 0 9px 5px 6px; display: flex; flex-direction: column; border-right: 1px solid #7c8a90; min-height: 0; }
.panel h2 { margin: 0; height: 29px; font-size: 12px; font-weight: normal; display: flex; align-items: center; justify-content: space-between; padding: 0 7px 0 4px; }
.maxi { width: 12px; height: 11px; border: 1px solid #111; border-top-width: 2px; }
.treebox { border: 1px solid #d4d4d4; background: #f0f0f0; flex: none; }
.treehead { height: 21px; display: flex; align-items: center; padding-left: 7px; gap: 18px; }
.uptri { border: 5px solid transparent; border-bottom-color: #111; border-top: 0; }
.corner { width: 17px; height: 21px; margin-left: auto; margin-right: 1px; background: #bfbfbf; }
.treemid { display: flex; height: 108px; }
.tree { list-style: none; margin: 0; padding: 0; flex: 1; min-width: 0; overflow: hidden; background: repeating-linear-gradient(#aaa 0 1px, #fff 1px 2px) 29px 0 / 1px 100% no-repeat #fff; }
.tree li { height: 20px; border-bottom: 1px solid #e8e8e8; white-space: nowrap; padding-left: 31px; }
.tree label { display: flex; align-items: center; height: 19px; gap: 3px; width: max-content; }
.tree label::before { content: ""; width: 7px; flex: none; border-top: 1px dotted #999; }
.tree svg { width: 15px; height: 15px; }
.tree input { appearance: none; margin: 0; width: 12px; height: 12px; flex: none; border: 1px solid #111; background: #fff; position: relative; }
.tree input::before { content: ""; position: absolute; left: 1px; top: 1px; width: 8px; height: 5px; border: solid #10b020; border-width: 0 0 2px 2px; transform: rotate(-50deg); }
.vscroll { width: 17px; flex: none; background: #f0f0f0; display: flex; flex-direction: column; align-items: center; }
.treemid .vscroll .thumb { width: 15px; height: 37px; margin-top: 33px; }
.thumb { background: #cdcdcd; }
.chev { width: 6px; height: 6px; border: solid #444; border-width: 2px 0 0 2px; flex: none; }
.u { transform: rotate(45deg); margin-top: 8px; }
.d { transform: rotate(225deg); margin-top: auto; margin-bottom: 7px; }
.l { transform: rotate(-45deg); }
.r { transform: rotate(135deg); margin-left: auto; }
.hscroll { height: 17px; flex: none; display: flex; align-items: center; padding: 0 24px 0 8px; background: #f0f0f0; }
.hscroll .thumb { height: 15px; margin-left: 4px; }
.t45 { width: 45px; }
.t70 { width: 70px; }
.splitter { height: 5px; margin: 1px 0 1px; background: #d8d8d8; border: 1px solid #b8b8b8; flex: none; }
.lower { flex: 1; min-height: 0; display: flex; flex-direction: column; }
.lowmid { flex: 1; min-height: 0; display: flex; }
.lowbody { flex: 1; overflow: hidden; border-left: 1px solid #d4d4d4; }
.lowbody h3 { margin: 0; height: 27px; padding: 4px 6px; font-size: 14px; font-weight: normal; color: #2888b8; }
.deps { margin: 0 0 6px 6px; border: 1px solid #d4d4d4; border-right: 0; padding-left: 1px; }
.deps i { display: block; height: 20px; border-bottom: 1px solid #e8e8e8; }
.deps i:nth-child(even) { background: #fafafa; }
.deps i:last-child { height: 16px; border: 0; }
.lowbody .details { height: 30px; border-top: 2px solid #ddd; }
.params { margin-left: 6px; border-collapse: collapse; width: 190px; table-layout: fixed; }
.params th { background: #f0f0f0; border: 1px solid #d0d0d0; text-align: left; font-weight: normal; height: 22px; padding: 0 6px; }
.params th:nth-child(1) { width: 65px; }
.params th:nth-child(2) { width: 40px; }
.params td { border: 1px solid #e0e0e0; height: 40px; }
.big { width: 16px; }
.big .thumb { width: 15px; height: 88px; margin-top: 3px; }
.big .d { margin-bottom: 8px; }

.canvas { flex: 1; min-width: 0; background: linear-gradient(#b4b4b6, #d2d3d4 48%, #e6e8e9 70%, #e8e8e9); }
.canvas svg { width: 100%; height: 100%; }
.triad text { font: 12px "Noto Sans", sans-serif; }

.glyph { position: relative; font-family: "Liberation Serif", serif; font-weight: bold; color: #2838b8; }
.glyph span, .tb .gc { position: absolute; }
.ga { left: 4px; top: 1px; font-size: 14px; color: #403878; }
.gb { left: 10px; top: 8px; font-size: 22px; font-style: italic; border-bottom: 1px solid; line-height: 18px; }
.tb .gc { left: 14px; top: 3px; width: 11px; height: 11px; }
.dark, .dark .ga { color: #333; }
.dark .gb { font-size: 19px; font-style: normal; border: 0; left: 13px; top: 10px; }
.finish { display: flex; align-items: center; gap: 3px; padding: 0 4px 0 4px; font-size: 11px; color: #bbb; }
.finish svg { width: 24px; height: 24px; }

.status { height: 22px; flex: none; border-top: 1px solid #aaa; display: flex; justify-content: flex-end; align-items: center; padding-right: 55px; }
.status svg { width: 36px; height: 16px; }

.taskbar { height: 40px; flex: none; background: #1a1a1a; color: #fff; display: flex; align-items: center; }
.tk { width: 47px; height: 40px; display: flex; align-items: center; justify-content: center; }
.tk svg { width: 24px; height: 24px; }
.bars { width: 4px; height: 16px; margin: 0 8px; border: solid #444; border-width: 0 1px; }
.bars + .tk { margin-left: 4px; }
.task { height: 40px; width: 132px; padding: 0 6px; display: flex; align-items: center; gap: 5px; border-bottom: 2px solid #76b9ed; white-space: nowrap; }
.task svg { width: 22px; height: 22px; }
.current { width: 140px; margin-left: 2px; padding-left: 10px; background: #4a4a4a; }
.t1 { margin: 0 4px; }
.tiny { font: bold 7px "Liberation Sans", sans-serif; fill: #d02020; }
.t1 + .bars { margin: 0 12px 0 16px; }
.net { margin: 0; display: grid; grid-template-columns: 40px auto; line-height: 13px; font-size: 11px; white-space: nowrap; }
.net dd { margin: 0; }
.tray { display: flex; align-items: center; gap: 9px; margin-left: auto; margin-right: 20px; position: relative; z-index: 2; }
.tray svg { width: 16px; height: 16px; }
.tray b { width: 14px; background: #fff; color: #222; text-align: center; line-height: 15px; }
.clock { display: flex; flex-direction: column; align-items: center; height: 100%; padding: 2px 8px 0 0; margin-right: 4px; line-height: 18px; border-right: 1px solid #555; }

.watermark { position: absolute; right: 8px; bottom: 1px; display: flex; align-items: center; gap: 9px; pointer-events: none; }
.watermark svg { width: 84px; height: 100px; }
.watermark div { display: flex; flex-direction: column; opacity: .85; }
.watermark strong { font: 700 46px/48px "Noto Sans", "Noto Sans CJK SC", sans-serif; color: #5cc0f0; white-space: nowrap; }
.watermark span { font: bold 19px/18px "DejaVu Sans", sans-serif; color: #3290c0; -webkit-text-stroke: 2px #fff; paint-order: stroke fill; white-space: nowrap; }
```
FILE: model.js
```js
// Direction marks wrapped round the curved petal: spindles on the far side,
// left-pointing arrows near the seam.
const group = document.getElementById("marks");
const lerp = (a, b, t) => a + (b - a) * t;
const leftEdge = [[312, 747], [350, 724], [395, 705], [450, 692], [505, 689], [580, 695], [640, 712]];
const rightEdge = [[312, 752], [335, 773], [360, 787], [400, 797], [440, 799], [500, 795], [640, 794]];
const edgeAt = (edge, y) => {
  for (let i = 1; i < edge.length; i++) {
    if (y <= edge[i][0]) {
      const [y0, x0] = edge[i - 1], [y1, x1] = edge[i];
      return lerp(x0, x1, Math.max(0, (y - y0) / (y1 - y0)));
    }
  }
  return edge[edge.length - 1][1];
};
let d = "";
const columns = 12;
for (let row = 0; row < 15; row++) {
  const seamY = 362 + row * 20;
  for (let c = 0; c <= columns; c++) {
    const u = c / columns;
    const across = 0.55 * u + 0.45 * u * u;
    const y = seamY - 30 * Math.pow(1 - across, 1.4);
    const x0 = edgeAt(leftEdge, y), x1 = edgeAt(rightEdge, y);
    const span = x1 - x0;
    const x = x0 + span * across;
    const w = Math.max(1, span / 105 * (1.5 + 2.6 * u));
    if (u > 0.8 && row > 1 && row < 12) {
      const l = 5 + u * 3;
      d += `M${x - l} ${y}l${l} -4v2l${l} 1v4l-${l} -1v3z`;
    } else if (row >= 10) {
      d += `M${x - 1} ${y - 12}h1L${x + w} ${y + 3}L${x + 1} ${y + 3}V${y + 10}H${x}V${y + 3}L${x - w} ${y + 3}z`;
    } else if (row < 2) {
      d += `M${x} ${y - 10}L${x + w} ${y - 4}L${x} ${y + 11}L${x - w} ${y - 4}z`;
    } else {
      d += `M${x + 1} ${y - 8}L${x + w} ${y + 1}L${x} ${y + 7}L${x - w} ${y + 1}z`;
    }
  }
}
const path = document.createElementNS("http://www.w3.org/2000/svg", "path");
path.setAttribute("d", d);
group.appendChild(path);
```
